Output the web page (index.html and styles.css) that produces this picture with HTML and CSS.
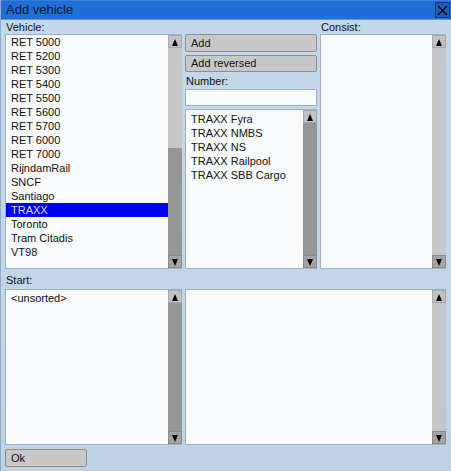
FILE: index.html
```html
<!DOCTYPE html>
<html>
<head>
<meta charset="utf-8">
<link rel="stylesheet" href="styles.css">
</head>
<body>
<div class="window">
  <div class="titlebar">
    <span class="title">Add vehicle</span>
    <div class="close"><svg width="13" height="13" viewBox="0 0 13 13"><path d="M2 2 L11 11 M11 2 L2 11" stroke="#000" stroke-width="1.3" fill="none"/></svg></div>
  </div>
  <div class="body">
    <div class="label lbl-vehicle">Vehicle:</div>
    <div class="label lbl-consist">Consist:</div>

    <div class="listbox box-vehicle">
      <div class="items">
        <div class="item">RET 5000</div>
        <div class="item">RET 5200</div>
        <div class="item">RET 5300</div>
        <div class="item">RET 5400</div>
        <div class="item">RET 5500</div>
        <div class="item">RET 5600</div>
        <div class="item">RET 5700</div>
        <div class="item">RET 6000</div>
        <div class="item">RET 7000</div>
        <div class="item">RijndamRail</div>
        <div class="item">SNCF</div>
        <div class="item">Santiago</div>
        <div class="item selected">TRAXX</div>
        <div class="item">Toronto</div>
        <div class="item">Tram Citadis</div>
        <div class="item">VT98</div>
      </div>
      <div class="scrollbar">
        <div class="arrow up"></div>
        <div class="track"><div class="thumb" style="height:107px"></div></div>
        <div class="arrow down"></div>
      </div>
    </div>

    <div class="mid">
      <div class="btn">Add</div>
      <div class="btn btn2">Add reversed</div>
      <div class="label lbl-number">Number:</div>
      <div class="input"></div>
      <div class="listbox box-mid">
        <div class="items pad2">
          <div class="item">TRAXX Fyra</div>
          <div class="item">TRAXX NMBS</div>
          <div class="item">TRAXX NS</div>
          <div class="item">TRAXX Railpool</div>
          <div class="item">TRAXX SBB Cargo</div>
        </div>
        <div class="scrollbar">
          <div class="arrow up"></div>
          <div class="track"><div class="thumb full"></div></div>
          <div class="arrow down"></div>
        </div>
      </div>
    </div>

    <div class="listbox box-consist">
      <div class="items"></div>
      <div class="scrollbar">
        <div class="arrow up"></div>
        <div class="track"></div>
        <div class="arrow down"></div>
      </div>
    </div>

    <div class="label lbl-start">Start:</div>

    <div class="listbox box-start">
      <div class="items pad1">
        <div class="item">&lt;unsorted&gt;</div>
      </div>
      <div class="scrollbar">
        <div class="arrow up"></div>
        <div class="track"><div class="thumb full"></div></div>
        <div class="arrow down"></div>
      </div>
    </div>

    <div class="listbox box-wide">
      <div class="items"></div>
      <div class="scrollbar">
        <div class="arrow up"></div>
        <div class="track"></div>
        <div class="arrow down"></div>
      </div>
    </div>

    <div class="btn ok">Ok</div>
  </div>
</div>
</body>
</html>
```

FILE: styles.css
```css
* { box-sizing: border-box; }
html, body { margin: 0; padding: 0; }
body {
  width: 451px;
  height: 471px;
  overflow: hidden;
  font-family: "Liberation Sans", Arial, sans-serif;
  font-size: 11px;
  color: #111;
}
.window {
  width: 451px;
  height: 471px;
  background: linear-gradient(180deg, #c4d8eb 0%, #c2d6ea 60%, #bfd3e6 100%);
  border-left: 1px solid #8faac6;
  display: flex;
  flex-direction: column;
}
.titlebar {
  height: 20px;
  background: #1e6fd8;
  border-top: 1px solid #3b7fd6;
  border-bottom: 1px solid #5f95d8;
  display: flex;
  align-items: center;
  justify-content: space-between;
  padding: 0 1px 0 5px;
}
.title {
  font-size: 13px;
  color: #0c1a2c;
  line-height: 18px;
}
.close {
  width: 15px;
  height: 16px;
  background: #1b5fbd;
  border: 1px solid #0e3b78;
  display: flex;
  align-items: center;
  justify-content: center;
}
.close svg { display: block; }
.body {
  display: grid;
  grid-template-columns: 177px 132px 126px;
  grid-template-rows: 14px 235px 20px 156px auto;
  column-gap: 3px;
  padding: 0 5px 0 4px;
}
.label {
  line-height: 15px;
  white-space: nowrap;
}
.lbl-vehicle { grid-column: 1; grid-row: 1; padding-left: 1px; }
.lbl-consist { grid-column: 3; grid-row: 1; padding-left: 1px; }
.lbl-start { grid-column: 1; grid-row: 3; padding-top: 4px; padding-left: 1px; }
.box-vehicle { grid-column: 1; grid-row: 2; }
.mid { grid-column: 2; grid-row: 2; display: flex; flex-direction: column; }
.box-consist { grid-column: 3; grid-row: 2; }
.box-start { grid-column: 1; grid-row: 4; }
.box-wide { grid-column: 2 / 4; grid-row: 4; }
.ok { grid-column: 1; grid-row: 5; margin-top: 4px; width: 82px; height: 17px; }

.listbox {
  display: flex;
  background: #f8fafc;
  border: 1px solid #9db1c5;
  border-right: none;
  overflow: hidden;
}
.items {
  flex: 1;
  min-width: 0;
}
.items.pad2 { padding-top: 2px; }
.items.pad1 { padding-top: 1px; }
.item {
  height: 14px;
  line-height: 14px;
  padding-left: 5px;
  white-space: nowrap;
}
.item.selected {
  background: #0000f4;
  color: #dcdcff;
}
.scrollbar {
  width: 14px;
  display: flex;
  flex-direction: column;
  background: #c6c6c6;
}
.track {
  flex: 1;
  display: flex;
  flex-direction: column;
}
.thumb {
  margin-top: auto;
  background: #969696;
}
.thumb.full { flex: 1; }
.arrow {
  height: 13px;
  background: #c2c2c2;
  border: 1px solid #a8a8a8;
  position: relative;
}
.arrow.down { background: #a4a4a4; border-color: #8a8a8a; }
.arrow::after {
  content: "";
  position: absolute;
  left: 3px;
  width: 0;
  height: 0;
  border-left: 3.5px solid transparent;
  border-right: 3.5px solid transparent;
}
.arrow.up::after { top: 3px; border-bottom: 7px solid #000; }
.arrow.down::after { top: 3px; border-top: 7px solid #000; }

.btn {
  height: 18px;
  background: #c8c8c8;
  border: 1px solid #8e8e8e;
  border-radius: 2px;
  line-height: 16px;
  padding-left: 5px;
  white-space: nowrap;
}
.btn2 { margin-top: 3px; height: 17px; line-height: 15px; }
.lbl-number { height: 17px; padding-top: 2px; padding-left: 1px; }
.input {
  height: 17px;
  background: #f8fafc;
  border: 1px solid #9db1c5;
}
.box-mid { margin-top: 3px; flex: 1; }
```
